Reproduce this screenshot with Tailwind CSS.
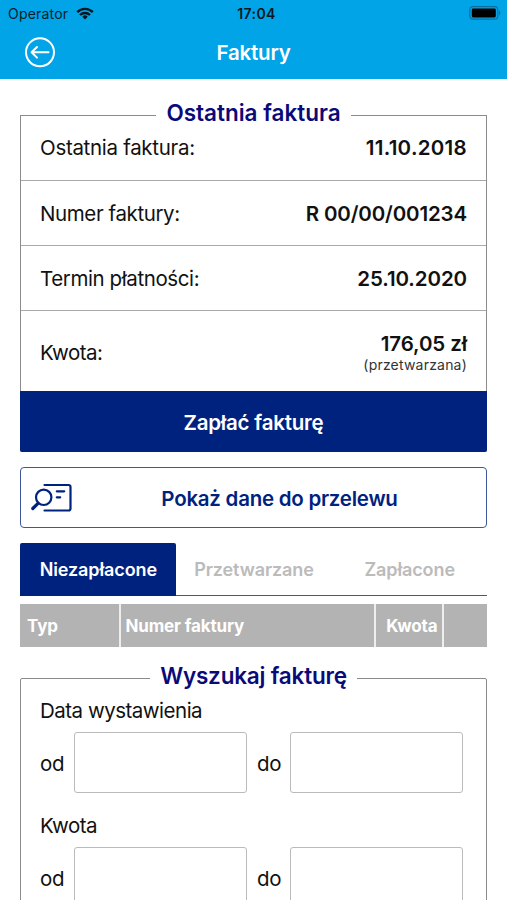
<!DOCTYPE html>
<html lang="pl">
<head>
    <meta charset="UTF-8">
    <meta name="viewport" content="width=device-width, initial-scale=1.0">
    <title>Faktury</title>
    <script src="https://cdn.jsdelivr.net/npm/@tailwindcss/browser@4"></script>
</head>
<body class="h-[900px] overflow-hidden bg-white font-['Inter',sans-serif] text-[20.5px] leading-6 tracking-[-0.3px] text-[#111] whitespace-nowrap">
    <header class="h-[79px] bg-[#02a4e8]">
        <!-- status bar -->
        <div class="grid h-[27px] grid-cols-3 items-center pl-2 pr-1.5 text-[14px] leading-none tracking-normal text-[#06202f]">
            <div class="flex items-center gap-2">
                <span class="tracking-[0.2px]">Operator</span>
                <svg class="-mt-px h-[13px] w-[18px]" viewBox="0 0 18 13" fill="none" stroke="#051822" stroke-width="2.4">
                    <path d="M1.2 5.1a11 11 0 0 1 15.6 0"/>
                    <path d="M4 8a7.1 7.1 0 0 1 10 0"/>
                    <path d="M9 12.4 6.3 9.7a3.8 3.8 0 0 1 5.4 0z" fill="#051822" stroke="none"/>
                </svg>
            </div>
            <span class="pl-1 text-center font-semibold tracking-[0.4px] text-[#051822]">17:04</span>
            <svg class="-mt-px h-[14px] w-[32px] justify-self-end" viewBox="0 0 32 14">
                <rect x=".8" y=".6" width="28" height="12.6" rx="3.2" fill="none" stroke="#066f9c" stroke-width="1.2"/>
                <rect x="2.8" y="2.4" width="24" height="9" rx="1.4" fill="#000"/>
                <path d="M30 4.6c1.8.6 1.8 4 0 4.6z" fill="#066f9c"/>
            </svg>
        </div>
        <div class="grid h-[50px] grid-cols-[1fr_auto_1fr] items-center px-6">
            <a href="#" aria-label="Wstecz">
                <svg class="size-8" viewBox="0 0 32 32" fill="none" stroke="#fff" stroke-width="2" stroke-linecap="round" stroke-linejoin="round">
                    <circle cx="16" cy="16.3" r="14"/>
                    <path d="M24.5 16.3H7.8M13 11 7.6 16.3 13 21.6"/>
                </svg>
            </a>
            <h1 class="pt-px font-semibold tracking-[-0.2px] text-white">Faktury</h1>
        </div>
    </header>

    <main class="px-5 pt-[22px]">
        <fieldset class="rounded-b-xs border border-b-0 border-[#8c8c8c]">
            <legend class="mx-auto h-7 px-2.5 text-[22.5px] leading-6 font-semibold tracking-normal text-[#0a0a78]">Ostatnia faktura</legend>
            <dl>
                <div class="flex h-[52px] items-start justify-between border-b border-[#aaa] px-[19px] pt-[7px]">
                    <dt>Ostatnia faktura:</dt>
                    <dd class="font-semibold tracking-[0.3px]">11.10.2018</dd>
                </div>
                <div class="flex h-[65px] items-center justify-between border-b border-[#aaa] px-[19px] pt-px">
                    <dt class="tracking-[-0.4px]">Numer faktury:</dt>
                    <dd class="font-semibold tracking-[-0.15px]">R 00/00/001234</dd>
                </div>
                <div class="flex h-[65px] items-center justify-between border-b border-[#aaa] px-[19px] pt-px">
                    <dt class="tracking-[-0.4px]">Termin płatności:</dt>
                    <dd class="font-semibold tracking-[-0.1px]">25.10.2020</dd>
                </div>
                <div class="flex h-20 items-center justify-between px-[19px]">
                    <dt class="pt-1 tracking-[-0.5px]">Kwota:</dt>
                    <dd class="pt-[3px] text-right">
                        <div class="font-semibold tracking-[-0.1px]">176,05 zł</div>
                        <div class="text-[14px] leading-[18px] tracking-[0.2px] text-[#333]">(przetwarzana)</div>
                    </dd>
                </div>
            </dl>
            <button class="-mx-px block h-[61px] w-[467px] rounded-b-xs bg-[#00227f] pt-0.5 font-semibold tracking-[-0.2px] text-white">Zapłać fakturę</button>
        </fieldset>

        <button class="mt-[15px] flex h-[61px] w-full items-center rounded border border-[#3f569b] pl-2.5 text-[#00227f]">
            <svg class="h-[29px] w-[42px]" viewBox="0 0 42 29" fill="none" stroke="currentColor" stroke-width="2.2" stroke-linecap="round">
                <path d="M13.5 2H37.5a2 2 0 0 1 2 2v21.5a2 2 0 0 1-2 2H13.5"/>
                <circle cx="12.7" cy="14.3" r="7.7"/>
                <path d="M7 20.3 1.8 25.5" stroke-width="3.2"/>
                <path d="M25.8 8.3h7.4M25.8 14.3h3.4"/>
            </svg>
            <span class="flex-1 pt-0.5 text-center font-semibold tracking-[-0.25px]">Pokaż dane do przelewu</span>
        </button>

        <nav class="mt-[15px] grid h-[53px] grid-cols-3 border-b border-[#3f569b] text-[18px] font-semibold tracking-[-0.1px] text-[#bbb]">
            <a href="#" class="-mb-px flex items-center justify-center rounded-t-xs bg-[#00227f] pl-px text-white">Niezapłacone</a>
            <a href="#" class="flex items-center justify-center pt-0.5 pl-px">Przetwarzane</a>
            <a href="#" class="flex items-center justify-center pt-0.5 pl-px">Zapłacone</a>
        </nav>

        <table class="mt-2 h-[43px] w-full table-fixed text-[17px] font-semibold tracking-[-0.15px] text-white">
            <thead>
                <tr class="bg-[#b3b3b3] text-left">
                    <th class="w-[99.5px] border-r-2 border-[#eee] pl-[7px]">Typ</th>
                    <th class="w-[255px] border-r-2 border-[#eee] pl-[5px]">Numer faktury</th>
                    <th class="w-[68px] border-r-2 border-[#eee] pr-1 text-right">Kwota</th>
                    <th></th>
                </tr>
            </thead>
        </table>

        <fieldset class="mt-[17px] h-[260px] rounded-xs border border-[#8c8c8c]">
            <legend class="mx-auto h-7 px-2.5 text-[22.5px] leading-6 font-semibold tracking-[-0.2px] text-[#0a0a78]">Wyszukaj fakturę</legend>
            <div class="px-[19px] pt-[7px]">
                <div class="tracking-[-0.5px]">Data wystawienia</div>
                <div class="mt-[9px] flex items-center">
                    <label for="dateFrom" class="w-[34px] pt-[3px]">od</label>
                    <input id="dateFrom" class="h-[61px] w-[173px] rounded-[3px] border border-[#bbb]">
                    <label for="dateTo" class="ml-[10px] w-[33px] pt-[3px]">do</label>
                    <input id="dateTo" class="h-[61px] w-[173px] rounded-[3px] border border-[#bbb]">
                </div>
                <div class="mt-[21px] tracking-[-0.5px]">Kwota</div>
                <div class="mt-[9px] flex items-center">
                    <label for="amountFrom" class="w-[34px] pt-[3px]">od</label>
                    <input id="amountFrom" class="h-[61px] w-[173px] rounded-[3px] border border-[#bbb]">
                    <label for="amountTo" class="ml-[10px] w-[33px] pt-[3px]">do</label>
                    <input id="amountTo" class="h-[61px] w-[173px] rounded-[3px] border border-[#bbb]">
                </div>
            </div>
        </fieldset>
    </main>
</body>
</html>
